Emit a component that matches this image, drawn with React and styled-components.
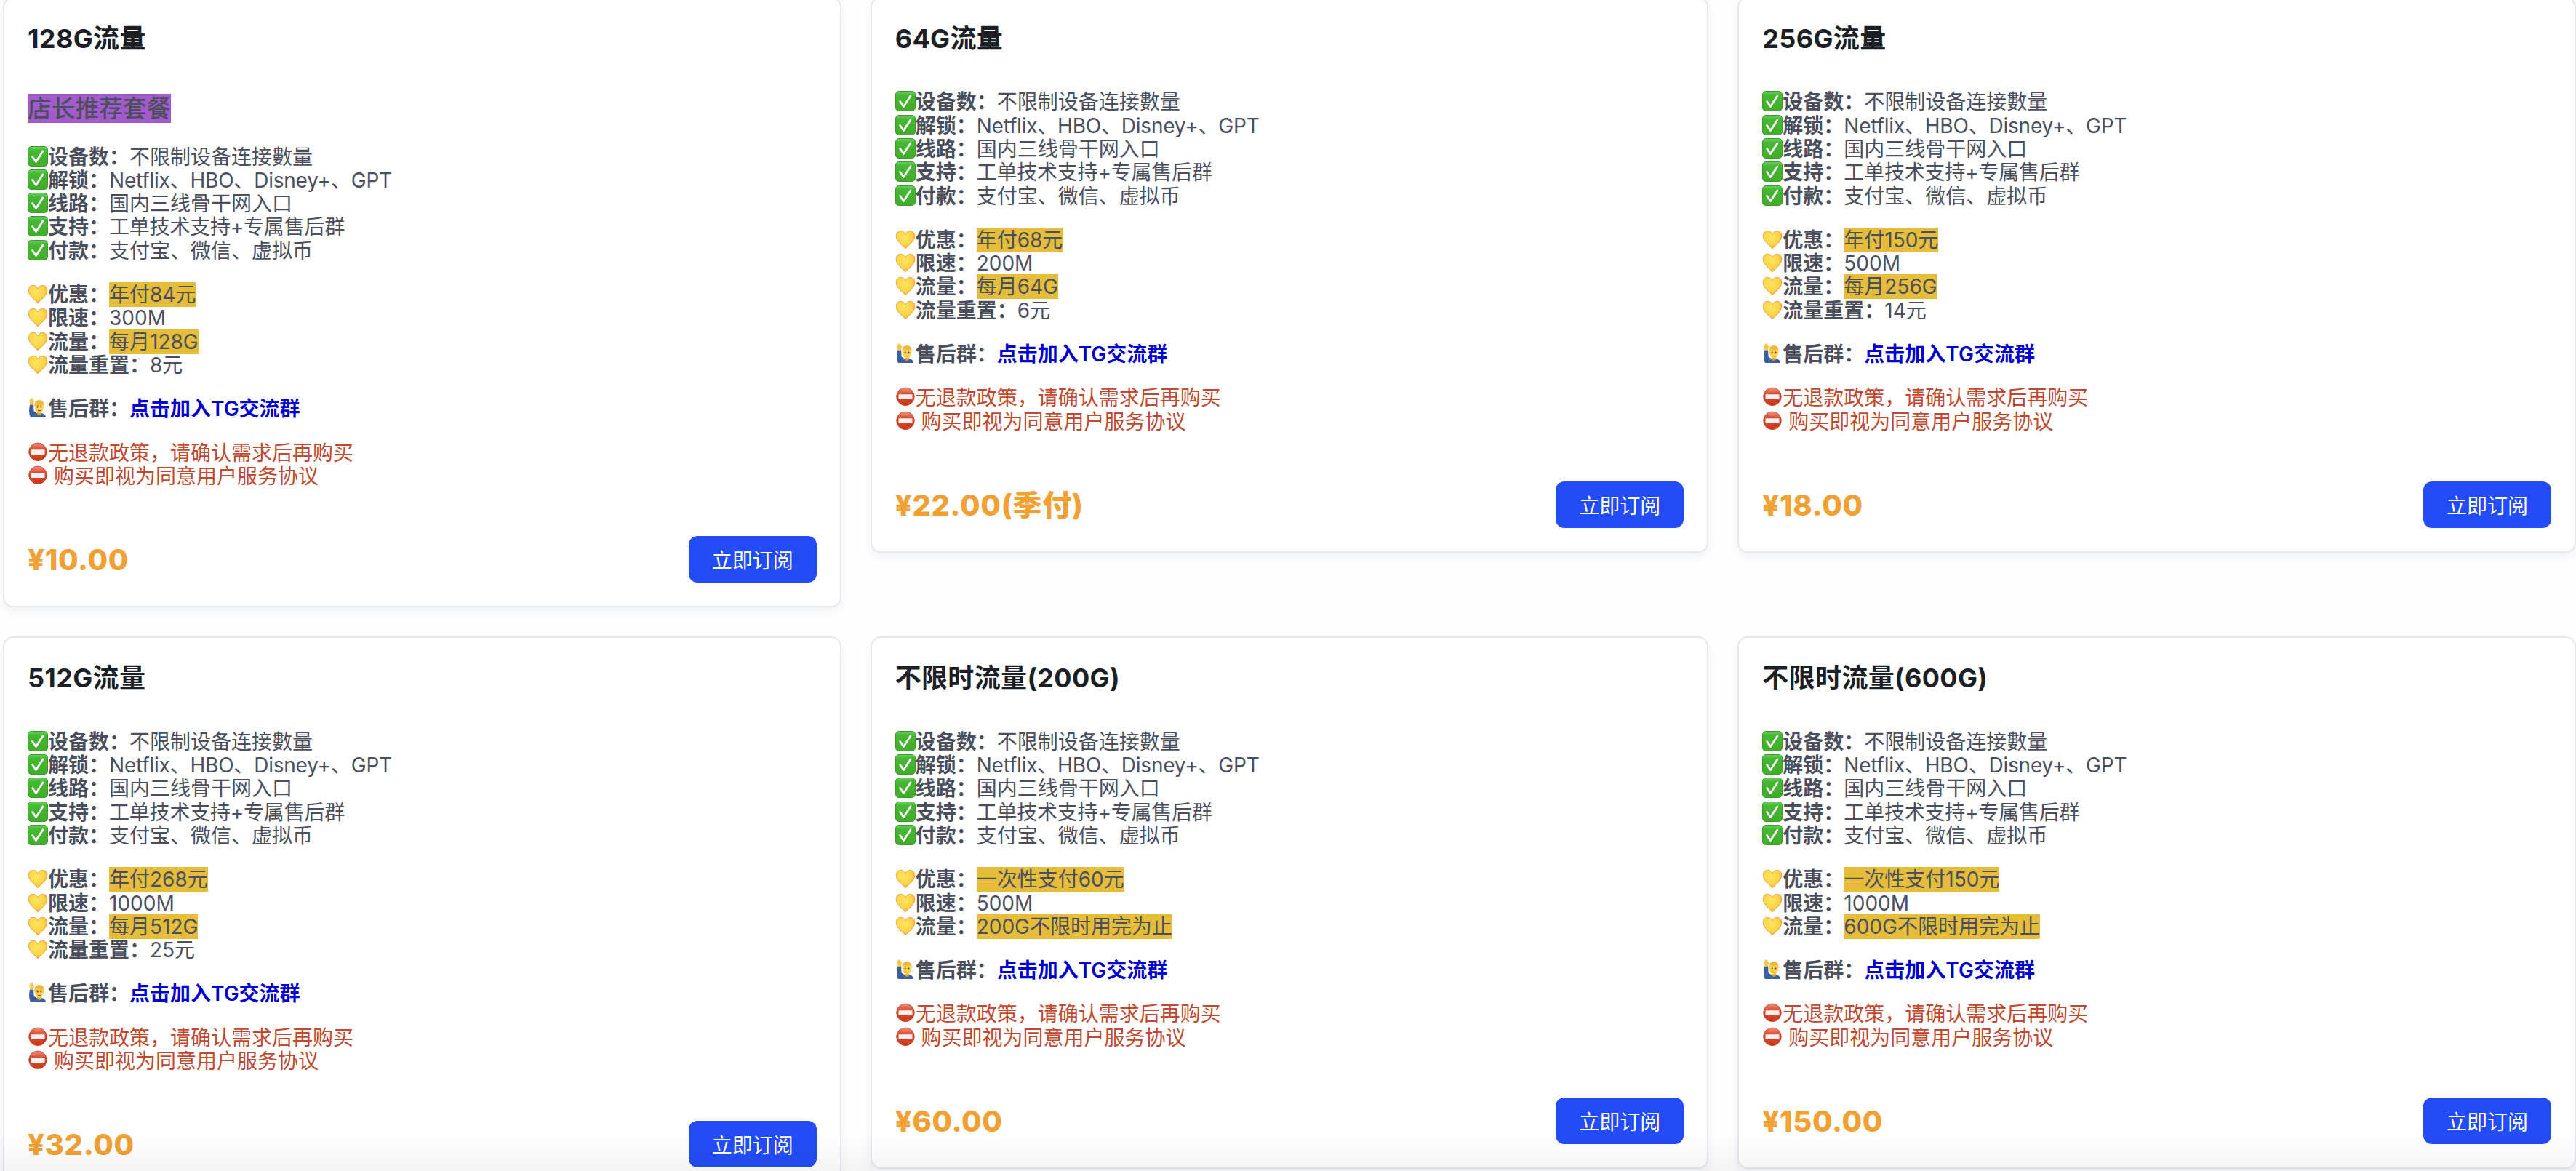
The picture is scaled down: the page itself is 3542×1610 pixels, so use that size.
import React from "react";
import styled, { createGlobalStyle } from "styled-components";

const GlobalStyle = createGlobalStyle`
  * {
    box-sizing: border-box;
  }

  html, body {
    margin: 0;
    height: 1610px;
    overflow: hidden;
    background: #fefefe;
  }

  body {
    font-family: Inter, "Noto Sans CJK SC", sans-serif;
    font-size: 28px;
    color: #4b4f5d;
  }
`;

const Page = styled.div`
  position: relative;
  height: 1610px;
  overflow: hidden;

  &::after {
    content: "";
    position: absolute;
    left: 0;
    right: 0;
    bottom: 0;
    height: 50px;
    background: linear-gradient(rgba(40, 40, 50, 0), rgba(40, 40, 50, 0.05));
    pointer-events: none;
  }
`;

const PlanGrid = styled.div`
  display: grid;
  grid-template-columns: repeat(3, 1fr);
  align-items: start;
  gap: 40px;
  margin: -4px 0 0 4px;
`;

const StyledCard = styled.div`
  padding: 32px;
  border: 2px solid #e7e8eb;
  border-radius: 14px;
  background: #fff;
  box-shadow: 0 6px 12px rgba(40, 45, 100, 0.06);
`;

const Title = styled.h2`
  margin: 0 0 20.4px;
  font-size: 36px;
  font-weight: 700;
  line-height: 46px;
  letter-spacing: 0.35px;
  color: #1c1f26;
`;

const Content = styled.div`
  display: flow-root;
  line-height: 32.3px;

  p {
    margin: 28px 0;
  }
`;

const Recommend = styled.h3`
  margin: 32.76px 0 30.46px;
  font-size: 32.76px;
  font-weight: 500;
  line-height: 40px;

  span {
    background: #a35bcb;
  }
`;

const Line = styled.span`
  display: flex;
  height: 32.3px;
  white-space: pre;
  color: ${(props) => (props.$warn ? "#bf4a31" : "inherit")};
`;

const Label = styled.strong`
  font-weight: 600;
`;

const Value = styled.span`
  letter-spacing: ${(props) => (props.$tight ? "-0.21px" : "normal")};
`;

const Mark = styled.span`
  background: ${(props) => (props.$on ? "#e5bd3a" : "transparent")};
`;

const GroupLink = styled.a`
  font-weight: 600;
  color: #0000d0;
  text-decoration: none;
`;

const StyledIcon = styled.svg`
  flex: none;
  width: 28px;
  height: 28px;
  margin-top: 1px;
`;

const Footer = styled.div`
  display: flex;
  align-items: center;
  justify-content: space-between;
  margin-top: 38.2px;
`;

const Price = styled.span`
  padding-top: 2px;
  font-size: 40px;
  font-weight: 800;
  line-height: 48px;
  letter-spacing: 0.6px;
  color: #f1a033;
`;

const BuyButton = styled.button`
  width: 176px;
  height: 64px;
  padding: 0;
  border: none;
  border-radius: 12px;
  background: #234bf6;
  color: #fff;
  font-family: inherit;
  font-size: 28px;
`;

const CheckIcon = () => (
  <StyledIcon viewBox="0 0 28 28">
    <defs>
      <linearGradient id="check" x1="0" y1="0" x2="0" y2="1">
        <stop offset="0" stopColor="#6dcf63" />
        <stop offset="0.2" stopColor="#45b833" />
        <stop offset="1" stopColor="#42ab2b" />
      </linearGradient>
    </defs>
    <rect x="0.5" y="0.5" width="27" height="27" rx="4.5" fill="url(#check)" stroke="#3c9c2f" />
    <path d="M6.6 14.4l4.9 7.2L20.900 6.900" fill="none" stroke="#fff" strokeWidth="2.7" strokeLinecap="round" strokeLinejoin="round" />
  </StyledIcon>
);

const HeartIcon = () => (
  <StyledIcon viewBox="0 0 28 28">
    <defs>
      <radialGradient id="heart" cx="0.42" cy="0.35" r="0.68">
        <stop offset="0" stopColor="#ffe45e" />
        <stop offset="0.65" stopColor="#fcd447" />
        <stop offset="1" stopColor="#f0a238" />
      </radialGradient>
    </defs>
    <path
      d="M14 26.800C11 22.600 1.200 17.400 1.200 9.200 1.200 5 4 2.400 7.500 2.400c3 0 5.300 1.800 6.500 4.500C15.200 4.200 17.500 2.400 20.500 2.400 24 2.400 26.800 5 26.800 9.200 26.800 17.400 17 22.600 14 26.800z"
      fill="url(#heart)"
      stroke="#e99a3c"
      strokeWidth="0.9"
    />
  </StyledIcon>
);

const PersonIcon = () => (
  <StyledIcon viewBox="0 0 28 28">
    <path d="M3 9.500l5.200-.3L8.500 18c1.500 2 3.500 3.200 6 3.200h4c3.500 0 6 1.800 6.800 5.800H3.800C1.500 21 1.800 15 3 9.500z" fill="#3b5f9f" />
    <path d="M3.600 9.800L2.300 4 3.100 3.600 3.300 1.500 4.200 1.300 4.700.4 5.800.6 6.900.8 8 3.600 9.200 3.700 7.900 9.600z" fill="#f6c64a" />
    <path d="M13 19h6v3.500q-3 2.500-6 0z" fill="#dfa034" />
    <ellipse cx="16" cy="12.800" rx="6" ry="8.200" fill="#fcd34c" />
    <path d="M9.800 13C8.500 7 11 3 16 3s7.500 4 6.300 10l-1.200-4.500c-3 .8-7 .2-9.600-1.200z" fill="#ecb73f" />
    <circle cx="13.700" cy="12.500" r="1" fill="#573919" />
    <circle cx="18.400" cy="12.500" r="1" fill="#573919" />
    <path d="M12.600 10.300h2.200M17.300 10.300h2.200" stroke="#97672a" strokeWidth="0.8" />
    <path d="M14 17.200q2 1 4 0" fill="none" stroke="#8a4d20" strokeWidth="1.100" />
  </StyledIcon>
);

const StopIcon = () => (
  <StyledIcon viewBox="0 0 28 28">
    <defs>
      <linearGradient id="stop" x1="0" y1="0" x2="0" y2="1">
        <stop offset="0" stopColor="#f0937d" />
        <stop offset="0.35" stopColor="#da4d34" />
        <stop offset="1" stopColor="#cd3718" />
      </linearGradient>
    </defs>
    <circle cx="14" cy="13.300" r="12.300" fill="url(#stop)" stroke="#b53a24" strokeWidth="0.7" />
    <rect x="4.500" y="10.300" width="19" height="6.800" rx="0.800" fill="#f4f1f0" />
  </StyledIcon>
);

const features = [
  { label: "设备数：", value: "不限制设备连接數量" },
  { label: "解锁：", value: "Netflix、HBO、Disney+、GPT", tight: true },
  { label: "线路：", value: "国内三线骨干网入口" },
  { label: "支持：", value: "工单技术支持+专属售后群", tight: true },
  { label: "付款：", value: "支付宝、微信、虚拟币" },
];

const plans = [
  { title: "128G流量", recommend: "店长推荐套餐", offer: "年付84元", speed: "300M", traffic: "每月128G", reset: "8元", price: "¥10.00" },
  { title: "64G流量", offer: "年付68元", speed: "200M", traffic: "每月64G", reset: "6元", price: "¥22.00(季付)" },
  { title: "256G流量", offer: "年付150元", speed: "500M", traffic: "每月256G", reset: "14元", price: "¥18.00" },
  { title: "512G流量", offer: "年付268元", speed: "1000M", traffic: "每月512G", reset: "25元", price: "¥32.00" },
  { title: "不限时流量(200G)", offer: "一次性支付60元", speed: "500M", traffic: "200G不限时用完为止", price: "¥60.00" },
  { title: "不限时流量(600G)", offer: "一次性支付150元", speed: "1000M", traffic: "600G不限时用完为止", price: "¥150.00" },
];

const InfoLine = ({ icon, label, value, mark, tight }) => (
  <Line>
    {icon}
    <Label>{label}</Label>
    <Value $tight={tight}>
      <Mark $on={mark}>{value}</Mark>
    </Value>
  </Line>
);

const PlanCard = ({ plan }) => (
  <StyledCard>
    <Title>{plan.title}</Title>
    <Content>
      {plan.recommend && (
        <Recommend>
          <span>{plan.recommend}</span>
        </Recommend>
      )}
      <p>
        {features.map((item) => (
          <InfoLine key={item.label} icon={<CheckIcon />} {...item} />
        ))}
      </p>
      <p>
        <InfoLine icon={<HeartIcon />} label="优惠：" value={plan.offer} mark />
        <InfoLine icon={<HeartIcon />} label="限速：" value={plan.speed} />
        <InfoLine icon={<HeartIcon />} label="流量：" value={plan.traffic} mark />
        {plan.reset && <InfoLine icon={<HeartIcon />} label="流量重置：" value={plan.reset} />}
      </p>
      <p>
        <Line>
          <PersonIcon />
          <Label>售后群：</Label>
          <GroupLink>点击加入TG交流群</GroupLink>
        </Line>
      </p>
      <p>
        <Line $warn>
          <StopIcon />
          无退款政策，请确认需求后再购买
        </Line>
        <Line $warn>
          <StopIcon />
          <span> 购买即视为同意用户服务协议</span>
        </Line>
      </p>
    </Content>
    <Footer>
      <Price>{plan.price}</Price>
      <BuyButton>立即订阅</BuyButton>
    </Footer>
  </StyledCard>
);

const App = () => (
  <Page>
    <GlobalStyle />
    <PlanGrid>
      {plans.map((plan) => (
        <PlanCard key={plan.title} plan={plan} />
      ))}
    </PlanGrid>
  </Page>
);

export default App;
